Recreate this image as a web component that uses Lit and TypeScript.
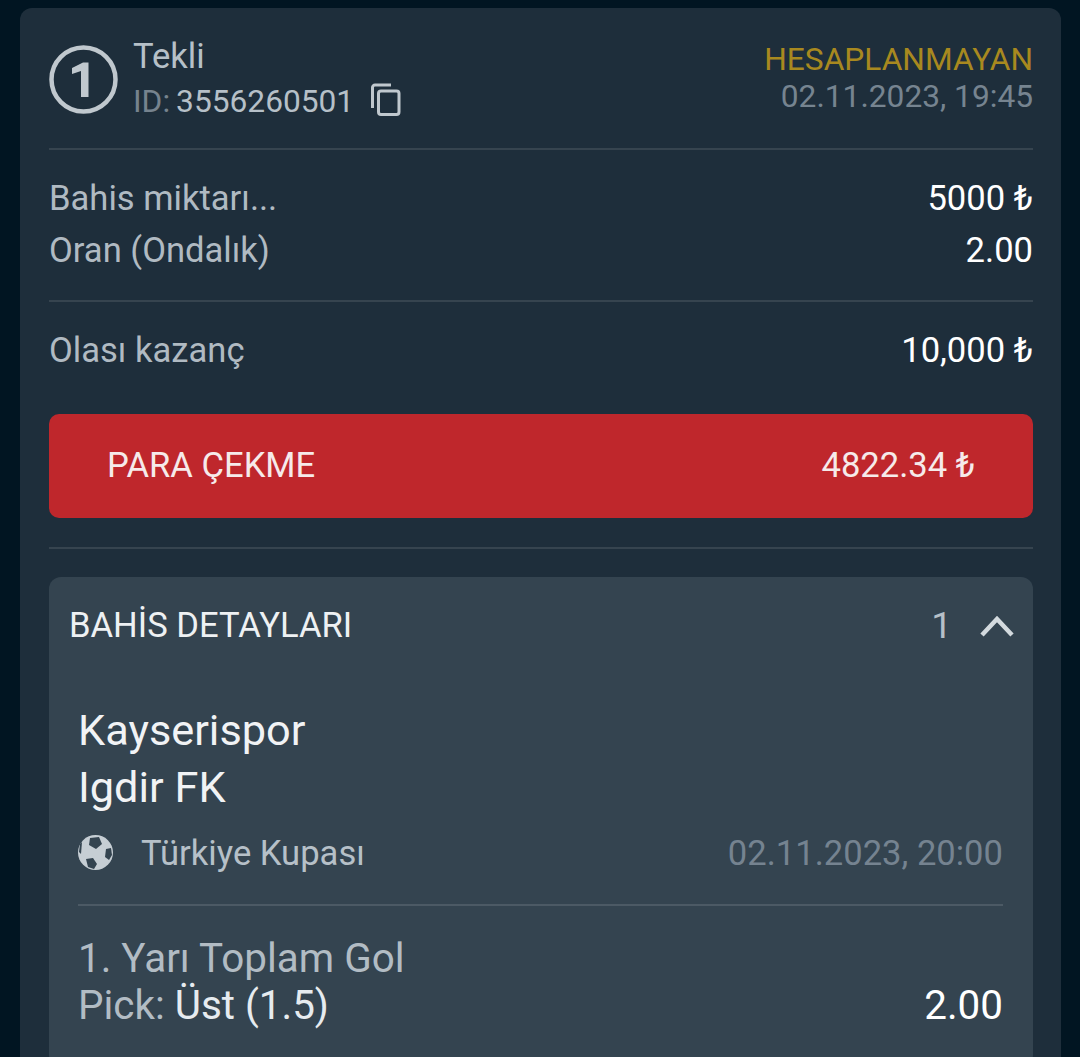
import { LitElement, html, css } from "lit";
import { customElement } from "lit/decorators.js";

@customElement("app-root")
class AppRoot extends LitElement {
  static override styles = css`
    :host {
      display: block;
      height: 1057px;
      overflow: hidden;
      background: #011522;
      font-family: Roboto, "Noto Sans", sans-serif;
      font-size: 34.6px;
      color: #fff;
    }
    .card {
      box-sizing: border-box;
      margin: 8px 19px 0 20px;
      height: 1049px;
      padding: 0 28px 0 29px;
      background: #1e2e3b;
      border-radius: 12px 12px 0 0;
    }
    .rule {
      height: 2px;
      background: #36444f;
    }
    .head {
      height: 140px;
      display: flex;
      justify-content: space-between;
    }
    .who {
      display: flex;
      gap: 15px;
    }
    .one {
      margin-top: 37px;
      width: 69px;
      height: 69px;
    }
    .names {
      padding-top: 26px;
    }
    .tekli {
      height: 45px;
      line-height: 44px;
      color: #b6c0c8;
    }
    .id {
      display: flex;
      align-items: center;
      height: 45px;
      font-size: 31.7px;
      color: #b6c0c8;
    }
    .id small {
      font-size: inherit;
      color: #76838e;
      margin-right: 6px;
    }
    .id svg {
      margin-left: 17px;
      margin-top: -4px;
    }
    .status {
      padding-top: 33px;
      text-align: right;
      font-size: 31.7px;
      line-height: 37px;
      color: #768490;
    }
    .status div {
      color: #a8891f;
    }
    .amounts {
      padding: 22px 0 24px;
    }
    .row {
      display: flex;
      justify-content: space-between;
      height: 52px;
      line-height: 52px;
      color: #b0bac2;
    }
    .row b {
      font-weight: 400;
      color: #fff;
    }
    .win {
      padding: 22px 0 38px;
    }
    .cash {
      box-sizing: border-box;
      height: 104px;
      padding: 0 58px 2px;
      display: flex;
      justify-content: space-between;
      align-items: center;
      background: #bf272c;
      border-radius: 10px;
      color: #f6eaea;
    }
    .sep {
      margin: 29px 0 28px;
    }
    .panel {
      height: 490px;
      background: #344450;
      border-radius: 12px;
    }
    .panel-head {
      height: 96px;
      padding: 0 19px 0 20px;
      display: flex;
      align-items: center;
      justify-content: space-between;
      color: #eef1f3;
    }
    .count {
      display: flex;
      align-items: center;
      gap: 28px;
      font-size: 37px;
      color: #b6c0c8;
    }
    .count svg {
      margin-top: 2px;
    }
    .match {
      padding: 29px 30px 0 29px;
    }
    .team {
      height: 57px;
      line-height: 57px;
      font-size: 43.3px;
      color: #f1f3f5;
    }
    .league {
      display: flex;
      align-items: center;
      justify-content: space-between;
      height: 67px;
      margin-top: 3px;
      color: #b6c0c8;
    }
    .league span:first-child {
      display: flex;
      align-items: center;
      gap: 28px;
    }
    .league .when {
      color: #758390;
    }
    .match .rule {
      background: #4c5a65;
      margin: 18px 0 0;
    }
    .market {
      margin-top: 29px;
      height: 48px;
      line-height: 48px;
      font-size: 40.4px;
      color: #b2bcc4;
    }
    .pick {
      display: flex;
      justify-content: space-between;
      height: 46px;
      line-height: 46px;
      font-size: 40.4px;
      color: #b2bcc4;
    }
    .pick b {
      font-weight: 400;
      color: #e6ebef;
    }
    .pick .odd {
      color: #fff;
    }
  `;

  override render() {
    return html`
      <div class="card">
        <div class="head">
          <div class="who">
            <svg class="one" viewBox="0 0 69 69">
              <circle cx="34.5" cy="34.5" r="32" fill="none" stroke="#c0c8ce" stroke-width="4.5" />
              <path d="M34 17.5h5.5V52h-7.5V26l-9 3v-6z" fill="#c0c8ce" />
            </svg>
            <div class="names">
              <div class="tekli">Tekli</div>
              <div class="id">
                <small>ID:</small>3556260501
                <svg width="30" height="33" viewBox="0 0 30 33" fill="none" stroke="#c0c8ce" stroke-width="3">
                  <path d="M20 2H4a2.5 2.5 0 0 0-2.5 2.5V25" />
                  <rect x="7.5" y="8" width="20.5" height="23.5" rx="2.5" />
                </svg>
              </div>
            </div>
          </div>
          <div class="status">
            <div>HESAPLANMAYAN</div>
            02.11.2023, 19:45
          </div>
        </div>
        <div class="rule"></div>
        <div class="amounts">
          <div class="row"><span>Bahis miktarı...</span><b>5000 ₺</b></div>
          <div class="row"><span>Oran (Ondalık)</span><b>2.00</b></div>
        </div>
        <div class="rule"></div>
        <div class="win">
          <div class="row"><span>Olası kazanç</span><b>10,000 ₺</b></div>
        </div>
        <div class="cash"><span>PARA ÇEKME</span><span>4822.34 ₺</span></div>
        <div class="rule sep"></div>
        <div class="panel">
          <div class="panel-head">
            <span>BAHİS DETAYLARI</span>
            <span class="count">
              1
              <svg width="34" height="22" viewBox="0 0 34 22" fill="none" stroke="#d3dade" stroke-width="4.5">
                <path d="M2 20L17 4l15 16" />
              </svg>
            </span>
          </div>
          <div class="match">
            <div class="team">Kayserispor</div>
            <div class="team">Igdir FK</div>
            <div class="league">
              <span>
                <svg width="35" height="35" viewBox="0 0 35 35">
                  <circle cx="17.5" cy="17.5" r="17.5" fill="#c6ced4" />
                  <path d="M12 3l9-1 3 7-6 5-7-4z" fill="#344450" />
                  <path d="M28 14l5-1 1 7-3 5-4-3z" fill="#344450" />
                  <path d="M8 24l7-1 4 6-3 5-6-2z" fill="#344450" />
                  <path d="M2 9l2-2-1 12-2-2z" fill="#344450" />
                </svg>
                Türkiye Kupası
              </span>
              <span class="when">02.11.2023, 20:00</span>
            </div>
            <div class="rule"></div>
            <div class="market">1. Yarı Toplam Gol</div>
            <div class="pick">
              <span>Pick: <b>Üst (1.5)</b></span>
              <b class="odd">2.00</b>
            </div>
          </div>
        </div>
      </div>
    `;
  }
}

declare global {
  interface HTMLElementTagNameMap {
    "app-root": AppRoot;
  }
}
